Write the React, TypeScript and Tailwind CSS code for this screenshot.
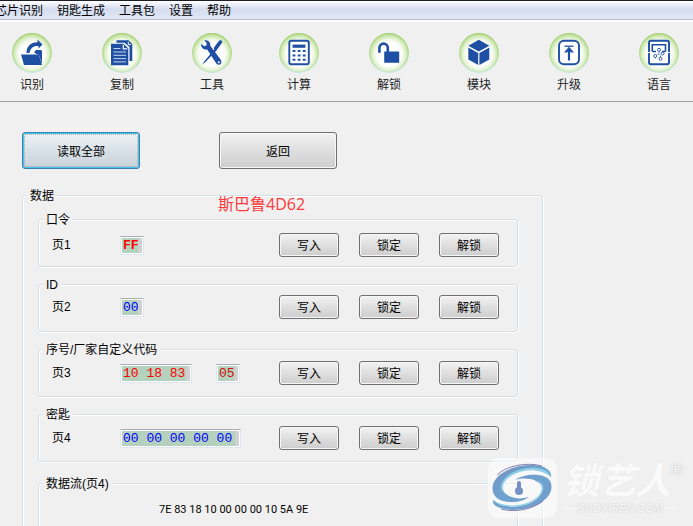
import type { ReactNode } from 'react'

const BLUE = '#1f4fa3'

const menus = ['芯片识别', '钥匙生成', '工具包', '设置', '帮助']

function Glyph({ children }: { children: ReactNode }) {
  return (
    <svg className="block size-10" viewBox="0 0 40 40" fill="none" aria-hidden="true">
      <defs>
        <radialGradient id="orb" cx="50%" cy="53%" r="50%">
          <stop offset="0" stopColor="#fff" />
          <stop offset="0.62" stopColor="#fff" />
          <stop offset="0.8" stopColor="#eaf5dd" />
          <stop offset="1" stopColor="#c2e2a0" />
        </radialGradient>
        <linearGradient id="rim" x1="0" y1="0" x2="0" y2="1">
          <stop offset="0" stopColor="#a5d071" />
          <stop offset="0.6" stopColor="#b6da94" />
          <stop offset="1" stopColor="#c4e6de" />
        </linearGradient>
      </defs>
      <circle cx="20" cy="20" r="19.3" fill="url(#orb)" stroke="url(#rim)" strokeWidth="1.2" />
      {children}
    </svg>
  )
}

const mainTools = [
  {
    label: '识别',
    icon: (
      <>
        <path d="M14.5 20C14.5 14 18 9.2 25.5 9.2V6.5L30.5 11.5L26.5 15.5V13C21.5 12.5 18.5 15 17.5 20Z" fill={BLUE} />
        <path d="M22.5 20V18.5L24 17H29L30 18V31L27 22Z" fill={BLUE} />
        <path d="M9 21.5H26.8L30 32H12Z" fill={BLUE} />
      </>
    ),
  },
  {
    label: '复制',
    icon: (
      <>
        <path d="M14.5 7.3H26.5L30.3 11V28H27.5V14L22.5 9.7H14.5Z" fill={BLUE} />
        <path d="M26.3 8.8V11.6H29" stroke="#fff" strokeWidth="1" />
        <path d="M9 10.8H21.5L26.3 15.5V32.3H9Z" fill={BLUE} />
        <path d="M21.3 11.8V15.8H25.3" stroke="#fff" strokeWidth="1.2" />
        <path d="M11.5 15.5H18.5M11.5 19H24M11.5 22.3H24M11.5 25.6H24M11.5 28.9H24" stroke="#c7d5ea" strokeWidth="1" />
      </>
    ),
  },
  {
    label: '工具',
    icon: (
      <>
        <path d="M29.3 7.2L30.5 9L24.5 17.5L13 29.5L10.3 31.4L12.2 28.5L22.2 16.5L21.8 14.8L27.2 7.6Z" fill={BLUE} />
        <path
          d="M12.2 7.4C15.5 6.5 18.6 8.8 18.3 12.8L28.6 26.5C30.2 29 29.2 31.6 27 31.8C25.4 32 24.6 31 23.8 29.8L15.2 16.6C11.8 17 9 14.8 9 10.7L12.3 13.3L14.6 12.2L14.4 9.6Z"
          fill={BLUE}
        />
        <circle cx="26.8" cy="29.2" r="1" fill="#fff" />
      </>
    ),
  },
]

const moreTools = [
  {
    label: '计算',
    icon: (
      <>
        <rect x="10.3" y="7.8" width="19.5" height="23.5" rx="2" stroke={BLUE} strokeWidth="1.9" />
        <rect x="13.6" y="11.6" width="12.8" height="3.2" fill={BLUE} />
        <path d="M13.6 18H26.6M13.6 22.4H26.6M13.6 26.7H26.6" stroke={BLUE} strokeWidth="2" strokeDasharray="2.8 2.3" />
      </>
    ),
  },
  {
    label: '解锁',
    icon: (
      <>
        <path d="M10.4 19.8V14.8A4.2 4.2 0 0 1 18.8 14.8V19.5" stroke={BLUE} strokeWidth="2.6" />
        <rect x="15.2" y="18.6" width="15" height="11.2" rx="0.5" fill={BLUE} />
      </>
    ),
  },
  {
    label: '模块',
    icon: (
      <>
        <path d="M19.8 6.7L30.3 12.7L19.8 18.6L9.3 12.7Z" fill={BLUE} />
        <path d="M9.3 14.4L19.2 20V32L9.3 26.4Z" fill={BLUE} />
        <path d="M30.3 14.4L20.4 20V32L30.3 26.4Z" fill={BLUE} />
      </>
    ),
  },
  {
    label: '升级',
    icon: (
      <>
        <rect x="10" y="7.8" width="20" height="23.4" rx="5" stroke={BLUE} strokeWidth="1.9" />
        <path d="M15.5 13.2H24.5" stroke={BLUE} strokeWidth="1.3" />
        <path d="M20 27.5V16" stroke={BLUE} strokeWidth="2.2" />
        <path d="M20 13.8L25 19.5H22L20 17.5L18 19.5H15Z" fill={BLUE} />
      </>
    ),
  },
  {
    label: '语言',
    icon: (
      <>
        <rect x="10" y="7.8" width="20" height="23.4" rx="2" stroke={BLUE} strokeWidth="1.9" />
        <path d="M13.3 18.5V11.8H26.5V18.5M13.3 18.5H17M23 18.5H26.5" stroke={BLUE} strokeWidth="1.6" />
        <path d="M9 19.5H12M28 19.5H31" stroke="#fff" strokeWidth="1" />
        <circle cx="20" cy="16.8" r="1.5" stroke={BLUE} strokeWidth="0.9" />
        <circle cx="23.5" cy="20.5" r="1.5" stroke={BLUE} strokeWidth="0.9" />
        <circle cx="16.3" cy="23" r="1.5" stroke={BLUE} strokeWidth="0.9" />
        <circle cx="21.5" cy="25.8" r="1.5" stroke={BLUE} strokeWidth="0.9" />
        <path d="M20 18.3V20.3M16.3 24.5V25.5M21.5 22.5V24.3M18.5 21.3H20.5" stroke={BLUE} strokeWidth="0.8" />
      </>
    ),
  },
]

type Field = { value: string; box: string; color: string }

type Page = { title: string; label: string; row: string; fields: Field[] }

const pages: Page[] = [
  {
    title: '口令',
    label: '页1',
    row: 'pt-[5px] pb-[9px]',
    fields: [{ value: 'FF', box: 'w-5', color: 'text-[#ff0000] font-bold' }],
  },
  {
    title: 'ID',
    label: '页2',
    row: 'pt-0.5 pb-3',
    fields: [{ value: '00', box: 'w-5', color: 'text-[#0000ff]' }],
  },
  {
    title: '序号/厂家自定义代码',
    label: '页3',
    row: 'pt-[3px] pb-[11px]',
    fields: [
      { value: '10 18 83', box: 'w-[68px]', color: 'text-[#ff0000]' },
      { value: '05', box: 'w-5', color: 'text-[#d01010]' },
    ],
  },
  {
    title: '密匙',
    label: '页4',
    row: 'pt-[3px] pb-[11px]',
    fields: [{ value: '00 00 00 00 00', box: 'w-[117px]', color: 'text-[#0000ff]' }],
  },
]

function ToolGroup({ tools }: { tools: { label: string; icon: ReactNode }[] }) {
  return (
    <div className="flex gap-[50px]">
      {tools.map((tool) => (
        <button key={tool.label} type="button" className="flex w-10 flex-col items-center gap-[3px] text-[#222]">
          <Glyph>{tool.icon}</Glyph>
          <span className="leading-[18px]">{tool.label}</span>
        </button>
      ))}
    </div>
  )
}

function SmallButton({ children }: { children: ReactNode }) {
  return (
    <button
      type="button"
      className="flex h-6 w-[60px] shrink-0 items-center justify-center rounded-[3px] border border-[#707070] bg-linear-to-b from-[#f3f3f3] from-0% via-[#dddddd] via-55% to-[#cdcdcd] pt-0.5 shadow-[inset_0_0_0_1px_#f6f6f6]"
    >
      {children}
    </button>
  )
}

function Group({ title, children }: { title: string; children: ReactNode }) {
  return (
    <fieldset className="min-w-0 rounded-[3px] border border-[#d5dfe8] shadow-[inset_1px_1px_#fff,1px_1px_#fff]">
      <legend className="ml-1 bg-[#f0f0f0] px-[3px] pt-0.5 leading-4">{title}</legend>
      {children}
    </fieldset>
  )
}

function PageRow({ page }: { page: Page }) {
  return (
    <Group title={page.title}>
      <div className={`flex items-center pr-[18px] pl-[13px] ${page.row}`}>
        <label htmlFor={page.label} className="w-[68px] shrink-0">
          {page.label}
        </label>
        <div className="flex flex-1 gap-6">
          {page.fields.map((field, i) => (
            <span key={field.value} className="border border-[#dfe5ee] border-t-[#abadb3] bg-white p-px">
              <input
                id={i === 0 ? page.label : `${page.label}-${i}`}
                aria-label={`${page.label} ${page.title}`}
                defaultValue={field.value}
                className={`block h-[15px] border-r-4 border-[#d0d0d0] bg-[#b4d1bd] pl-px font-['Liberation_Mono',monospace] text-[13px] leading-[15px] outline-none ${field.box} ${field.color}`}
              />
            </span>
          ))}
        </div>
        <div className="flex gap-5">
          <SmallButton>写入</SmallButton>
          <SmallButton>锁定</SmallButton>
          <SmallButton>解锁</SmallButton>
        </div>
      </div>
    </Group>
  )
}

function Watermark() {
  return (
    <div className="pointer-events-none absolute right-4 bottom-2 flex items-center gap-1.5 text-[#fafafa]">
      <svg className="h-[60px] w-[69px]" viewBox="0 0 69 60" fill="none" aria-hidden="true">
        <defs>
          <linearGradient id="swirl" x1="0" y1="0" x2="1" y2="1">
            <stop offset="0" stopColor="#7390c0" />
            <stop offset="0.5" stopColor="#6fa3cf" />
            <stop offset="1" stopColor="#7299c7" />
          </linearGradient>
        </defs>
        <rect width="69" height="60" rx="11" fill="#fff" fillOpacity="0.5" />
        <path d="M5 34C1 19 22 6 46 7C58 8 64 13 63 19C56 11 42 9 29 14C13 20 9 32 21 38C27 41 34 41 41 39C33 46 8 47 5 34Z" fill="url(#swirl)" />
        <path d="M13 27C17 15 34 8 49 10C57 11 61 14 63 19C55 12 41 10 29 15C15 21 12 29 17 35C13 33 12 30 13 27Z" fill="#8dcfe8" />
        <path d="M63 25C67 40 47 52 24 52C11 51 4 48 5 42C14 50 28 50 40 46C55 40 59 28 48 23C42 20 34 20 27 22C36 15 60 14 63 25Z" fill="url(#swirl)" />
        <path d="M55 32C51 44 35 50 19 48C12 48 8 45 5 42C13 48 27 49 39 45C54 39 58 29 49 22C54 24 56 28 55 32Z" fill="#8dcfe8" />
        <path d="M9 17C19 7 40 4 54 8" stroke="#7b72aa" strokeWidth="0.9" />
        <path d="M13 51C28 55 45 51 55 43" stroke="#7b72aa" strokeWidth="0.9" />
        <path d="M31 25V32" stroke="#7690c1" strokeWidth="4" strokeLinecap="round" />
        <circle cx="31" cy="33" r="4" fill="#7690c1" />
      </svg>
      <div className="flex flex-col">
        <div className="flex items-start">
          <span className="text-[36px] leading-10 font-bold italic [text-shadow:0_0_1px_#e8e8e8]">锁艺人</span>
          <span className="-mr-1.5 font-['Liberation_Sans',sans-serif] text-base leading-4 [text-shadow:0_0_2px_#b8b8b8]">®</span>
        </div>
        <div className="flex items-center font-['Liberation_Sans',sans-serif] text-[11px] leading-3 italic [text-shadow:0_0_2px_#bbbbbb]">
          <span className="h-px flex-1 bg-[#f9f9f9]" />
          SUOYIREN.COM
          <span className="h-px flex-1 bg-[#f9f9f9]" />
        </div>
      </div>
    </div>
  )
}

export default function App() {
  return (
    <div className="relative h-screen overflow-hidden bg-[#f0f0f0] font-['Liberation_Sans','Noto_Sans_CJK_SC',sans-serif] text-xs text-black">
      {/* Menu bar */}
      <nav className="h-[22px] border-t border-[#1d1d28] bg-white">
        <div className="-ml-[5px] flex h-[19px] items-center gap-3.5 border-b border-[#b6bccc] bg-linear-to-b from-white from-0% via-[#d5dcee] via-45% to-[#e0e7f6] pt-0.5">
          {menus.map((menu) => (
            <button key={menu} type="button" className="shrink-0 leading-4">
              {menu}
            </button>
          ))}
        </div>
      </nav>

      {/* Toolbar */}
      <div className="flex justify-between border-b border-[#a0a0a0] pt-[11px] pr-3.5 pb-[7px] pl-3">
        <ToolGroup tools={mainTools} />
        <ToolGroup tools={moreTools} />
      </div>

      <main className="pt-[30px] pr-[150px] pl-[22px]">
        <div className="mb-[17px] flex gap-[79px]">
          <button
            type="button"
            className="h-[37px] w-[118px] rounded-[3px] border border-[#3c7fb1] bg-linear-to-b from-[#eef2f5] from-0% via-[#d9e1e8] via-50% to-[#c8d1d9] pt-0.5 shadow-[inset_0_0_0_1px_#43c5f2] outline-1 -outline-offset-3 outline-dotted outline-[#a9a9a9]"
          >
            读取全部
          </button>
          <button
            type="button"
            className="h-[37px] w-[118px] rounded-[3px] border border-[#707070] bg-linear-to-b from-[#f3f3f3] from-0% via-[#dfdfdf] via-50% to-[#cdcdcd] pt-0.5 shadow-[inset_0_0_0_1px_#f6f6f6]"
          >
            返回
          </button>
        </div>

        <div className="relative">
          <p className="absolute top-2 left-[196px] font-['Open_Sans','Noto_Sans_CJK_SC',sans-serif] text-base leading-5 text-[#fb3a3a]">
            斯巴鲁4D62
          </p>
          <Group title="数据">
            <div className="flex flex-col gap-2 pt-1.5 pr-6 pl-[15px]">
              {pages.map((page) => (
                <PageRow key={page.label} page={page} />
              ))}
              <div className="pt-1">
                <Group title="数据流(页4)">
                  <p className="pt-2.5 pb-8 pl-[120px] font-['Roboto',sans-serif] text-[11px] leading-4">
                    7E 83 18 10 00 00 00 10 5A 9E
                  </p>
                </Group>
              </div>
            </div>
          </Group>
        </div>
      </main>

      <Watermark />
    </div>
  )
}
